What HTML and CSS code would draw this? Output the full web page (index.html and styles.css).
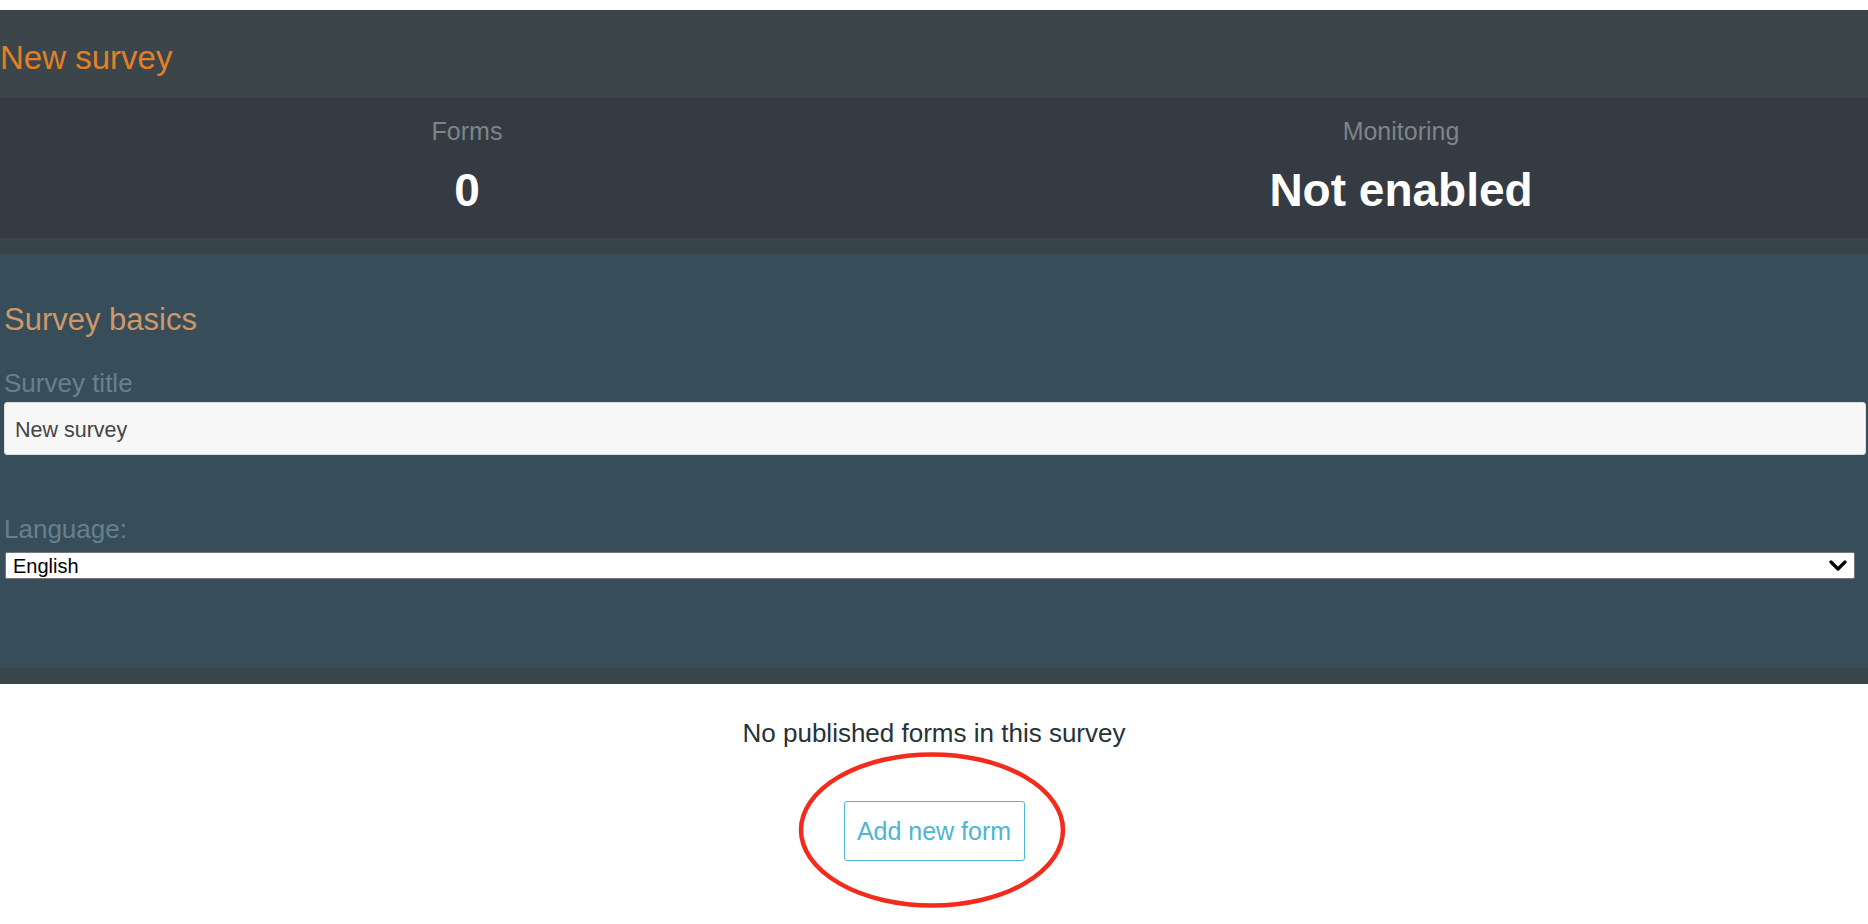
FILE: index.html
```html
<!DOCTYPE html>
<html lang="en">
<head>
<meta charset="utf-8">
<title>New survey</title>
<link rel="stylesheet" href="styles.css">
</head>
<body>
<div class="page">
  <header class="survey-header">
    <h1 class="survey-name">New survey</h1>
  </header>
  <section class="stats">
    <div class="stat">
      <div class="stat-label">Forms</div>
      <div class="stat-value">0</div>
    </div>
    <div class="stat">
      <div class="stat-label">Monitoring</div>
      <div class="stat-value">Not enabled</div>
    </div>
  </section>
  <div class="band"></div>
  <section class="basics">
    <h2 class="basics-title">Survey basics</h2>
    <label class="field-label" for="title">Survey title</label>
    <input class="text-input" id="title" type="text" value="New survey">
    <label class="field-label lang-label" for="lang">Language:</label>
    <div class="select-wrap">
      <select class="lang-select" id="lang">
        <option>English</option>
      </select>
      <svg class="chev" width="18" height="12" viewBox="0 0 18 12"><polyline points="2,2 9,9 16,2" fill="none" stroke="#000" stroke-width="3.2" stroke-linecap="round" stroke-linejoin="round"/></svg>
    </div>
  </section>
  <div class="band band-bottom"></div>
  <section class="empty">
    <p class="empty-text">No published forms in this survey</p>
    <div class="btn-wrap">
      <button class="btn-add" type="button">Add new form</button>
      <svg class="circle-mark" width="270" height="160" viewBox="0 0 270 160"><ellipse cx="134" cy="79" rx="131" ry="75.5" fill="none" stroke="#f22b1d" stroke-width="4.5"/></svg>
    </div>
  </section>
</div>
</body>
</html>
```
FILE: styles.css
```css
html, body {
  margin: 0;
  padding: 0;
  background: #ffffff;
}
body {
  font-family: "Liberation Sans", Arial, sans-serif;
}
.page {
  padding-top: 10px;
}
.survey-header {
  background: #3b454a;
  padding: 28px 0 20px 0;
}
.survey-name {
  margin: 0;
  font-size: 33px;
  line-height: 40px;
  font-weight: normal;
  color: #e18026;
}
.stats {
  background: #343b42;
  display: grid;
  grid-template-columns: 1fr 1fr;
  padding: 18px 0 22px 0;
}
.stat {
  text-align: center;
}
.stat-label {
  font-size: 25px;
  line-height: 30px;
  color: #7f8488;
}
.stat-value {
  margin-top: 18px;
  font-size: 46px;
  line-height: 52px;
  font-weight: bold;
  color: #ffffff;
}
.band {
  height: 16px;
  background: #384449;
}
.band-bottom {
  height: 16px;
  background: #3a454a;
}
.basics {
  background: #374e5a;
  padding: 48px 2px 89px 4px;
  display: flex;
  flex-direction: column;
}
.basics-title {
  margin: 0;
  font-size: 31px;
  line-height: 36px;
  font-weight: normal;
  color: #cd9868;
}
.field-label {
  margin-top: 30px;
  font-size: 26px;
  line-height: 30px;
  color: #67808e;
}
.text-input {
  margin-top: 4px;
  box-sizing: border-box;
  height: 53px;
  width: 100%;
  padding: 3px 10px 0 10px;
  border: 1px solid #dedede;
  border-radius: 3px;
  background: #f7f7f7;
  font-family: "Liberation Sans", Arial, sans-serif;
  font-size: 21.5px;
  color: #444444;
  outline: none;
}
.lang-label {
  margin-top: 59px;
}
.select-wrap {
  margin-top: 8px;
  position: relative;
  width: calc(100% - 12px);
  margin-left: 1px;
}
.lang-select {
  appearance: none;
  -webkit-appearance: none;
  box-sizing: border-box;
  width: 100%;
  height: 27px;
  padding: 0 0 0 7px;
  border: 1px solid #767676;
  border-radius: 2px;
  background: #ffffff;
  font-family: "Liberation Sans", Arial, sans-serif;
  font-size: 20px;
  color: #000000;
  outline: none;
}
.chev {
  position: absolute;
  right: 8px;
  top: 8px;
  pointer-events: none;
}
.empty {
  display: flex;
  flex-direction: column;
  align-items: center;
  padding-bottom: 70px;
}
.empty-text {
  margin: 34px 0 0 0;
  font-size: 26px;
  line-height: 30px;
  color: #263238;
}
.btn-wrap {
  position: relative;
  margin-top: 53px;
}
.btn-add {
  box-sizing: border-box;
  height: 60px;
  width: 181px;
  padding: 0;
  border: 1px solid #4eb5d3;
  border-radius: 3px;
  background: #ffffff;
  font-family: "Liberation Sans", Arial, sans-serif;
  font-size: 25px;
  color: #4eb5d3;
  cursor: pointer;
}
.circle-mark {
  position: absolute;
  left: -46px;
  top: -50px;
  pointer-events: none;
}
```
